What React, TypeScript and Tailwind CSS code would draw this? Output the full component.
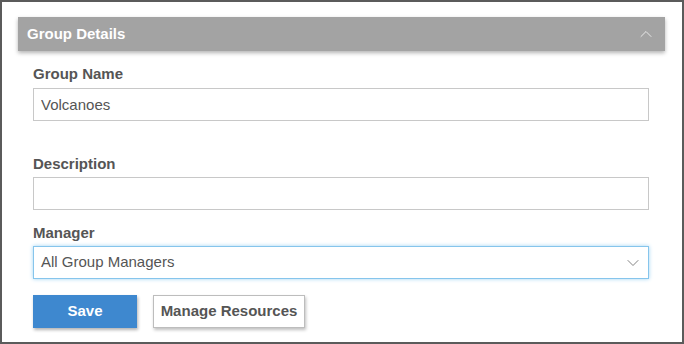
import { ChevronUp, ChevronDown } from 'lucide-react';

export default function App() {
  return (
    <div
      className="w-[684px] h-[344px] bg-white border-2 border-[#5b5b5b] pt-[15px] pl-[16px] pr-[17px]"
      style={{ fontFamily: '"Liberation Sans", Arial, sans-serif' }}
    >
      <div className="h-[34px] bg-[#a3a3a3] shadow-[0_2px_4px_rgba(0,0,0,0.3)] flex items-center justify-between pl-[9px] pr-[9px]">
        <span className="text-white font-bold text-[15px]">Group Details</span>
        <ChevronUp className="text-[#eeeeee]" size={20} strokeWidth={1.1} />
      </div>

      <div className="pl-[15px] pr-[16px]">
        <div className="mt-[14px]">
          <label className="block text-[15px] leading-[17px] font-bold text-[#555]">Group Name</label>
          <input
            defaultValue="Volcanoes"
            className="mt-[6px] w-full h-[33px] border border-[#c8c8c8] px-[7px] text-[15px] text-[#555] outline-none"
          />
        </div>

        <div className="mt-[34px]">
          <label className="block text-[15px] leading-[17px] font-bold text-[#555]">Description</label>
          <input className="mt-[5px] w-full h-[33px] border border-[#c8c8c8] px-[7px] text-[15px] text-[#555] outline-none" />
        </div>

        <div className="mt-[14px]">
          <label className="block text-[15px] leading-[17px] font-bold text-[#555]">Manager</label>
          <div className="mt-[5px] h-[33px] border border-[#86c5ec] shadow-[0_0_4px_#9fd3f3] flex items-center justify-between pl-[7px] pr-[5px]">
            <span className="text-[15px] text-[#555]">All Group Managers</span>
            <ChevronDown className="text-[#777]" size={20} strokeWidth={1.1} />
          </div>
        </div>

        <div className="mt-[16px] flex gap-[16px]">
          <button className="w-[104px] h-[33px] bg-[#3e88cf] text-white font-bold text-[15px] shadow-[1px_2px_3px_rgba(0,0,0,0.3)]">
            Save
          </button>
          <button className="w-[152px] h-[33px] bg-white border border-[#bdbdbd] text-[#555] font-bold text-[15px] shadow-[1px_2px_3px_rgba(0,0,0,0.25)]">
            Manage Resources
          </button>
        </div>
      </div>
    </div>
  );
}
